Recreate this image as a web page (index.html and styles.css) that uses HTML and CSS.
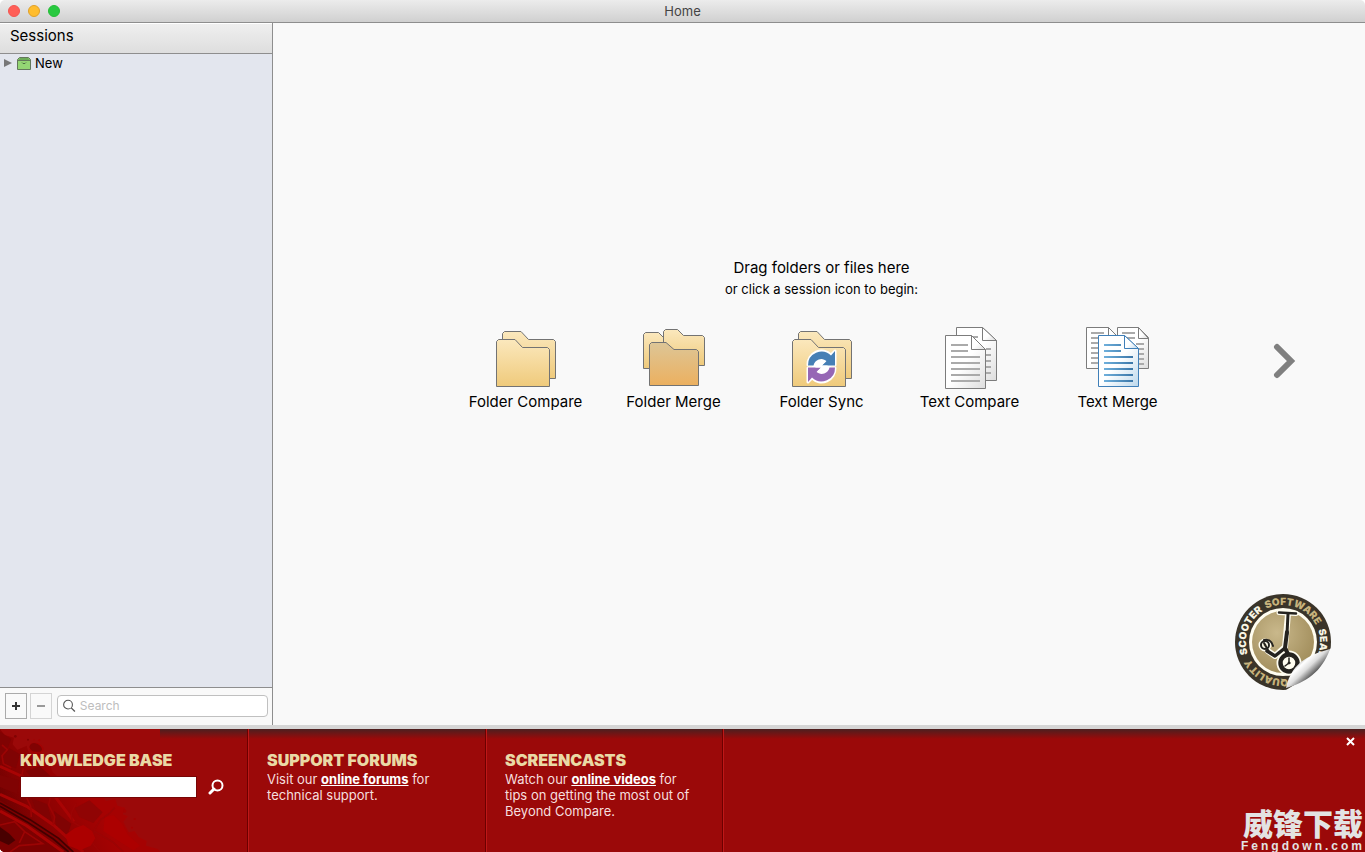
FILE: index.html
```
<!DOCTYPE html>
<html lang="en">

<head>
  <meta charset="utf-8">
  <title>Home</title>
  <meta name="viewport" content="width=device-width, initial-scale=1.0">
  <link rel="stylesheet" href="styles.css">
</head>

<body>
  <header class="titlebar">
    <div class="lights">
      <button type="button" class="light red" aria-label="Close window"></button>
      <button type="button" class="light yellow" aria-label="Minimize window"></button>
      <button type="button" class="light green" aria-label="Zoom window"></button>
    </div>
    <h1>Home</h1>
    <div></div>
  </header>

  <div class="workspace">
    <aside class="sidebar">
      <h2>Sessions</h2>
      <ul class="tree">
        <li>
          <button type="button" class="tree-item">
            <svg width="8" height="8" viewBox="0 0 8 8"><path d="M0 0L8 4L0 8Z" fill="#787878"/></svg>
            <svg class="box-icon" width="14" height="13" viewBox="0 0 14 13">
              <path d="M.5 2.5L2.5 .5H11.5L13.5 2.5V12.5H.5Z" fill="#94d674" stroke="#64785c"/>
              <path d="M1 3L3 1H11L13 3Z" fill="#6cab57"/>
              <path d="M.5 3.5H13.5" stroke="#64785c"/>
              <path d="M5 5.5L6 6.5H8L9 5.5" fill="none" stroke="#4d7043"/>
            </svg>
            New
          </button>
        </li>
      </ul>
      <div class="sidebar-tools">
        <button type="button" class="tool" aria-label="Add session">
          <svg width="10" height="10" viewBox="0 0 10 10"><path d="M1 5H9M5 1V9" stroke="#333" stroke-width="2"/></svg>
        </button>
        <button type="button" class="tool" aria-label="Remove session" disabled>
          <svg width="10" height="10" viewBox="0 0 10 10"><path d="M1 5H9" stroke="#999" stroke-width="2"/></svg>
        </button>
        <label class="search">
          <svg width="14" height="14" viewBox="0 0 14 14"><circle cx="5.5" cy="5.5" r="4.8" fill="none" stroke="#555" stroke-width="1.2"/><path d="M9 9L13 13" stroke="#555" stroke-width="1.4"/></svg>
          <input type="text" placeholder="Search" aria-label="Search">
        </label>
      </div>
    </aside>

    <main class="main">
      <section class="welcome">
        <h2>Drag folders or files here</h2>
        <p>or click a session icon to begin:</p>
        <div class="sessions">
          <button type="button" class="session">
            <svg width="64" height="64" viewBox="0 0 64 64">
              <defs>
                <linearGradient id="folder" x1="0" y1="0" x2="0" y2="1"><stop offset="0" stop-color="#fbe8bd"/><stop offset="1" stop-color="#efca7b"/></linearGradient>
                <linearGradient id="folder-dark" x1="0" y1="0" x2="0" y2="1"><stop offset="0" stop-color="#ddc697"/><stop offset="1" stop-color="#ecb05f"/></linearGradient>
                <linearGradient id="paper" x1="0" y1="0" x2="1" y2="1"><stop offset=".5" stop-color="#fff"/><stop offset="1" stop-color="#ddd"/></linearGradient>
                <linearGradient id="paper-blue" x1="0" y1="0" x2="1" y2="1"><stop offset=".5" stop-color="#fff"/><stop offset="1" stop-color="#bcd8ec"/></linearGradient>
                <linearGradient id="ink-blue" gradientUnits="userSpaceOnUse" x1="18" y1="0" x2="48" y2="0"><stop offset="0" stop-color="#6fb0dc"/><stop offset="1" stop-color="#3874a6"/></linearGradient>
              </defs>
              <g fill="url(#folder)" stroke="#737373">
                <path d="M8.500 52.500V7.500L10.500 5.500H27L34.500 13.500H59.500L61.500 15.500V52.500Z"/>
                <path d="M2.500 60.500V15.500L4.500 13.500H21L28.500 21.500H53.500L55.500 23.500V60.500Z"/>
              </g>
            </svg>
            Folder Compare
          </button>
          <button type="button" class="session">
            <svg width="64" height="64" viewBox="0 0 64 64">
              <g fill="url(#folder)" stroke="#737373">
                <path d="M1.500 42.500V8.500L3.500 6.500H16.500L21.500 11.500H40V42.500Z"/>
                <path d="M21.500 39.500V5.500L23.500 3.500H35.500L41.500 9.500H60.500L62.500 11.500V39.500Z"/>
                <path d="M7.500 59.500V18.500L9.500 16.500H24L32 23.500H54.500L56.500 25.500V59.500Z" fill="url(#folder-dark)"/>
              </g>
            </svg>
            Folder Merge
          </button>
          <button type="button" class="session">
            <svg width="64" height="64" viewBox="0 0 64 64">
              <g fill="url(#folder)" stroke="#737373">
                <path d="M8.500 52.500V7.500L10.500 5.500H27L34.500 13.500H59.500L61.500 15.500V52.500Z"/>
                <path d="M2.500 60.500V15.500L4.500 13.500H21L28.500 21.500H53.500L55.500 23.500V60.500Z"/>
              </g>
              <g stroke="#fff" stroke-width="3" stroke-linejoin="round" fill="#fff">
                <circle cx="31.500" cy="40.500" r="8"/>
                <path d="M18 39A13.500 13.500 0 0 1 41 29L45 25V39H18Z"/>
                <path d="M45 42A13.500 13.500 0 0 1 22 52L18 56V42H45Z"/>
              </g>
              <path d="M18 39.500A13.500 13.500 0 0 1 41 29.500L45 25V39.500H32L36.500 35A8 8 0 0 0 23.500 39.500Z" fill="#467fb5"/>
              <path d="M45 41.500A13.500 13.500 0 0 1 22 51.500L18 56V41.500H31L26.500 46A8 8 0 0 0 39.500 41.500Z" fill="#9667b5"/>
              <path d="M25 40.500C26 36 32 33.500 36 35.500L31.500 39.500H37.500L38 41C37 45 31 47.500 27 45.500L31.500 41.500H25.500Z" fill="#fff"/>
            </svg>
            Folder Sync
          </button>
          <button type="button" class="session">
            <svg width="64" height="64" viewBox="0 0 64 64">
              <g fill="url(#paper)" stroke="#7c7c7c">
                <path d="M18.500 1.500H44.500L58.500 14.500V54.500H18.500Z"/>
                <path d="M44.500 1.500V14.500H58.500Z"/>
              </g>
              <path d="M34 11H40M48 23H53M48 29H53M48 35H53M48 41H53M48 47H53" stroke="#aaa" stroke-width="2"/>
              <g fill="url(#paper)" stroke="#7c7c7c">
                <path d="M7.500 9.500H33.500L47.500 23.500V62.500H7.500Z"/>
                <path d="M33.500 9.500V23.500H47.500Z"/>
              </g>
              <path d="M13 19H30M13 25H30M13 31H42M13 37H42M13 43H42M13 49H42M13 55H42" stroke="#aaa" stroke-width="2"/>
            </svg>
            Text Compare
          </button>
          <button type="button" class="session">
            <svg width="64" height="64" viewBox="0 0 64 64">
              <g fill="url(#paper)" stroke="#7c7c7c">
                <path d="M.5 1.500H22.500L32.500 11.500V42.500H.5Z"/>
                <path d="M22.500 1.500V11.500H32.500Z"/>
                <path d="M31.500 1.500H52.500L62.500 11.500V42.500H31.500Z"/>
                <path d="M52.500 1.500V12.500H62.500Z"/>
              </g>
              <path d="M5 7H18M5 12H18M5 17H12M5 22H12M5 27H12M5 32H12M5 37H12M36 7H49M36 12H49M50 18H58M50 23H58M50 28H58M50 33H58M50 38H58" stroke="#aaa" stroke-width="2"/>
              <g fill="url(#paper-blue)" stroke="#3f7fb8">
                <path d="M12.500 9.500H38.500L52.500 22.500V60.500H12.500Z"/>
                <path d="M38.500 9.500V22.500H52.500Z"/>
              </g>
              <path d="M18 19H35M18 25H35M18 31H47M18 37H47M18 43H47M18 49H47M18 55H47" stroke="url(#ink-blue)" stroke-width="2"/>
            </svg>
            Text Merge
          </button>
        </div>
      </section>

      <button type="button" class="next" aria-label="More sessions">
        <svg width="24" height="36" viewBox="0 0 24 36"><path d="M5 4L19 18L5 32" fill="none" stroke="#808080" stroke-width="6" stroke-linecap="round"/></svg>
      </button>

      <svg class="seal" width="100" height="100" viewBox="0 0 100 100">
        <defs>
          <path id="ring" d="M76.200 76.200A37 37 0 0 1 23.800 23.800A37 37 0 0 1 76.200 76.200"/>
          <radialGradient id="gold" cx=".4" cy=".35" r=".7"><stop offset="0" stop-color="#c9b88b"/><stop offset="1" stop-color="#a08c5a"/></radialGradient>
          <linearGradient id="curl" gradientUnits="userSpaceOnUse" x1="64" y1="68" x2="79" y2="84"><stop offset="0" stop-color="#999"/><stop offset=".3" stop-color="#fff"/><stop offset=".6" stop-color="#ddd"/><stop offset="1" stop-color="#555"/></linearGradient>
          <clipPath id="peel"><path d="M0 0H100V55L97 57Q84 80 53 98H0Z"/></clipPath>
        </defs>
        <g clip-path="url(#peel)">
          <circle cx="50" cy="50" r="48" fill="#3a3429"/>
          <circle cx="50" cy="50" r="34" fill="#fffdf0"/>
          <circle cx="50" cy="50" r="31" fill="url(#gold)"/>
          <g class="seal-text" fill="#f8f4e4">
            <text><textPath href="#ring" startOffset="75">SCOOTER</textPath></text>
            <text><textPath href="#ring" startOffset="191">SEAL</textPath></text>
            <text fill="#c6b27c"><textPath href="#ring" startOffset="128">SOFTWARE</textPath></text>
            <text fill="#c6b27c"><textPath href="#ring" startOffset="24">QUALITY</textPath></text>
          </g>
          <g fill="none" stroke-linecap="round" stroke-linejoin="round">
            <g stroke="#fffdf0">
              <path d="M46 20.500L63 21.500" stroke-width="5"/>
              <path d="M55 22L52 55L42 64L35 59" stroke-width="6"/>
              <circle cx="32" cy="53" r="4" stroke-width="5"/>
              <circle cx="56" cy="71" r="9" stroke-width="7"/>
            </g>
            <g stroke="#25231f">
              <path d="M46 20.500L63 21.500" stroke-width="2.500"/>
              <path d="M55 22L54 42" stroke-width="3"/>
              <path d="M54 40L52 56L56 64" stroke-width="4"/>
              <path d="M52 56L42 64L34 59" stroke-width="3.500"/>
              <circle cx="32" cy="53" r="4" stroke-width="2"/>
              <path d="M31 48C36 47 39 50 40 54" stroke-width="2"/>
              <path d="M31 51L36 60" stroke-width="2"/>
              <circle cx="56" cy="71" r="8.500" stroke-width="4.500" fill="#fffdf0"/>
              <circle cx="56" cy="71" r="1" fill="#25231f"/>
              <path d="M56 71V66M56 71L52 74" stroke-width="1.500"/>
            </g>
          </g>
        </g>
        <path d="M97 57C80 62 59 68 53 96C72 91 89 80 97 57Z" fill="url(#curl)"/>
      </svg>
    </main>
  </div>

  <footer class="footer">
    <svg class="treads" width="160" height="123" viewBox="0 12 480 369">
      <defs>
        <linearGradient id="grime" gradientUnits="userSpaceOnUse" x1="0" y1="330" x2="260" y2="190"><stop offset="0" stop-color="#5a0000"/><stop offset=".4" stop-color="#850202"/><stop offset="1" stop-color="#a50202"/></linearGradient>
      </defs>
      <path d="M0 12L14 30L42 38L38 58L52 74L80 62L84 76L92 90L112 84L132 92L126 106L150 116L158 142L190 168L214 190L246 200L270 216L304 208L318 228L346 222L352 242L376 248L368 268L384 274L370 290L386 322L404 318L416 336L440 348L438 362L474 372L480 381H0Z" fill="url(#grime)"/>
      <g fill="#a20202">
        <path d="M88 64C92 50 116 50 126 62C138 76 124 88 112 86C96 88 86 78 88 64Z"/>
        <circle cx="404" cy="282" r="3"/><circle cx="118" cy="46" r="3"/><circle cx="102" cy="44" r="2"/><circle cx="374" cy="258" r="5"/><circle cx="396" cy="308" r="3"/>
      </g>
      <g fill="#800303">
        <path d="M88 66C92 50 108 52 120 62C132 74 124 82 112 80C98 82 92 76 88 66Z"/>
        <circle cx="46" cy="34" r="4"/><circle cx="84" cy="44" r="3"/>
        <path d="M0 20L34 42L24 66L0 104Z"/>
        <path d="M8 98L28 70L60 88L48 130L6 112Z"/>
        <path d="M78 138L120 124L150 152L136 170L96 160Z"/>
        <path d="M0 150L58 166L52 208L0 186Z"/>
        <path d="M94 220L142 238L156 288L112 268Z"/>
        <path d="M162 258L214 296L200 336L170 316Z"/>
        <path d="M224 250L268 226L308 262L280 294L238 276Z" fill="#900404"/>
      </g>
      <path d="M0 226L90 280L180 342L222 381H0Z" fill="#7c0101"/>
      <g fill="none">
        <g stroke="#a80404" stroke-width="9">
          <path d="M0 208L80 244L160 300L250 381"/>
          <path d="M0 124L70 156L166 216L222 290"/>
          <path d="M0 258L80 302L190 381"/>
        </g>
        <g stroke="#420000" stroke-width="5">
          <path d="M0 234L90 284L176 340L220 381"/>
          <path d="M0 244L80 290L160 342L206 381"/>
        </g>
        <g stroke="#9b0404" stroke-width="5">
          <path d="M66 150L62 184L78 214L92 244L94 276M152 212L146 240L164 276L160 300M228 236L214 264L216 290L266 318"/>
          <path d="M6 60L22 74L6 92L10 116L34 128M70 130L64 156M282 316L300 286L330 264L344 248M284 318L270 346L300 381M282 318L340 352L370 381"/>
          <path d="M0 300L44 290L74 320L128 356L104 358L58 362L30 381M74 320L58 354"/>
        </g>
      </g>
      <path d="M0 306L28 326L46 346L26 360L0 348Z" fill="#480000"/>
      <path d="M196 330L224 310L250 300L276 318L286 340L272 362L240 376L206 362ZM314 278L340 270L366 296L384 330L420 362L400 376L350 344L310 318Z" fill="#ac0000"/>
    </svg>

    <section class="panel knowledge">
      <h3><label for="kb-search">KNOWLEDGE BASE</label></h3>
      <form class="kb-form">
        <input type="text" id="kb-search">
        <button type="button" aria-label="Search knowledge base">
          <svg width="16" height="16" viewBox="0 0 16 16"><circle cx="9.500" cy="6.500" r="5" fill="none" stroke="#fff" stroke-width="2"/><path d="M6 10L2 14" stroke="#fff" stroke-width="3" stroke-linecap="round"/></svg>
        </button>
      </form>
    </section>
    <section class="panel">
      <h3>SUPPORT FORUMS</h3>
      <p>Visit our <a href="#">online forums</a> for<br>technical support.</p>
    </section>
    <section class="panel screencasts">
      <h3>SCREENCASTS</h3>
      <p>Watch our <a href="#">online videos</a> for<br>tips on getting the most out of<br>Beyond Compare.</p>
    </section>
    <div class="footer-rest"></div>
    <button type="button" class="close" aria-label="Close panel">
      <svg width="9" height="9" viewBox="0 0 9 9"><path d="M1 1L8 8M8 1L1 8" stroke="#fff" stroke-width="2"/></svg>
    </button>
    <div class="watermark">
      <span class="watermark-name">威锋下载</span>
      <span class="watermark-site">Fengdown.com</span>
    </div>
  </footer>
</body>

</html>
```

FILE: styles.css
```
* {
  box-sizing: border-box;
}

body {
  display: flex;
  flex-direction: column;
  min-height: 100vh;
  margin: 0;
  background-color: #ffffff;
  color: #000000;
  font-family: Inter, "Liberation Sans", sans-serif;
  font-size: 13px;
  line-height: 16px;
}

h1,
h2,
h3,
p,
ul {
  margin: 0;
  padding: 0;
  font-weight: 400;
}

svg {
  display: block;
}

button {
  padding: 0;
  border: 0;
  background: none;
  color: inherit;
  font: inherit;
}

.titlebar {
  display: grid;
  grid-template-columns: 1fr auto 1fr;
  align-items: center;
  height: 23px;
  border-bottom: 1px solid #8e8e8e;
  border-radius: 5px 5px 0 0;
  background: linear-gradient(to bottom, #ececec, #d0d0d0);
}

.titlebar h1 {
  color: #444444;
  font-size: 13px;
}

.lights {
  display: flex;
  gap: 8px;
  padding-left: 8px;
}

.light {
  width: 12px;
  height: 12px;
  border: 1px solid #f45550;
  border-radius: 50%;
  background-color: #ff5f57;
}

.light.yellow {
  border-color: #e0a028;
  background-color: #ffbd2e;
}

.light.green {
  border-color: #24bd36;
  background-color: #28c940;
}

.workspace {
  display: flex;
  flex: 1;
}

.sidebar {
  display: flex;
  flex-direction: column;
  width: 273px;
  border-right: 1px solid #8e8e8e;
  background-color: #e3e6ee;
}

.sidebar h2 {
  height: 31px;
  padding: 3px 10px;
  border-top: 1px solid #ffffff;
  border-bottom: 1px solid #8e8e8e;
  background: linear-gradient(to bottom, #efefef, #dedede);
  font-size: 15px;
  line-height: 18px;
}

.tree {
  flex: 1;
  list-style: none;
}

.tree-item {
  display: flex;
  align-items: center;
  gap: 4px;
  height: 18px;
  padding-left: 4px;
}

.box-icon {
  margin-left: 1px;
}

.sidebar-tools {
  display: flex;
  align-items: center;
  gap: 3px;
  height: 38px;
  padding: 0 4px 2px 5px;
  border-top: 1px solid #8e8e8e;
  background-color: #f9f9f9;
}

.tool {
  display: flex;
  align-items: center;
  justify-content: center;
  width: 22px;
  height: 26px;
  border: 1px solid #aaaaaa;
}

.tool:disabled {
  border-color: #d4d4d4;
}

.search {
  display: flex;
  flex: 1;
  align-items: center;
  gap: 4px;
  height: 22px;
  margin-left: 2px;
  padding: 0 5px;
  border: 1px solid #c0c0c0;
  border-radius: 4px;
  background-color: #ffffff;
}

.search input {
  width: 100%;
  padding: 0;
  border: 0;
  background: none;
  font: inherit;
  font-size: 12px;
  outline: none;
}

.search input::placeholder {
  color: #bdbdbd;
}

.main {
  position: relative;
  display: flex;
  flex: 1;
  align-items: center;
  justify-content: center;
  padding: 0 0 78px 5px;
  background-color: #f9f9f9;
}

.welcome {
  text-align: center;
}

.welcome h2 {
  font-size: 15px;
  line-height: 20px;
}

.welcome p {
  margin-top: 3px;
}

.sessions {
  display: flex;
  margin-top: 29px;
}

.session {
  display: flex;
  flex-direction: column;
  align-items: center;
  gap: 2px;
  width: 148px;
  font-size: 15px;
  line-height: 20px;
}

.next {
  position: absolute;
  top: 320px;
  right: 69px;
}

.seal {
  position: absolute;
  right: 32px;
  bottom: 33px;
}

.seal-text {
  font-size: 10px;
  font-weight: 900;
}

.footer {
  position: relative;
  display: flex;
  height: 127px;
  border-top: 4px solid #d6d6d6;
  border-radius: 0 0 0 5px;
  background: #9b0909 linear-gradient(to bottom, #4b2020, #9b0909 10px);
  color: #f6dfdf;
  overflow: hidden;
}

.treads {
  position: absolute;
  top: 0;
  left: 0;
  background-color: #9b0909;
}

.panel {
  position: relative;
  width: 238px;
  padding: 21px 18px;
  border-right: 1px solid #6c0000;
  border-left: 1px solid #be1818;
}

.knowledge {
  width: 248px;
  padding-left: 20px;
  border-left: 0;
}

.screencasts {
  width: 237px;
}

.footer-rest {
  flex: 1;
  border-left: 1px solid #be1818;
}

.panel h3 {
  margin-bottom: 1px;
  color: #ead9a5;
  font-size: 16px;
  font-weight: 900;
  line-height: 20px;
}

.panel a {
  color: #ffffff;
  font-weight: 700;
}

.kb-form {
  display: flex;
  align-items: center;
  gap: 11px;
  padding-top: 5px;
}

.kb-form input {
  width: 177px;
  height: 22px;
  padding: 0 4px;
  border: 1px solid #780505;
  background-color: #ffffff;
  font: inherit;
}

.close {
  position: absolute;
  top: 8px;
  right: 10px;
}

.watermark {
  position: absolute;
  right: 0;
  bottom: 0;
  color: #e3e3e3;
  text-align: center;
}

.watermark span {
  display: block;
}

.watermark-name {
  font-family: "Noto Sans CJK SC", sans-serif;
  font-size: 30px;
  font-weight: 900;
  line-height: 36px;
}

.watermark-site {
  font-family: "Liberation Sans", sans-serif;
  font-size: 12px;
  font-weight: 700;
  letter-spacing: 3px;
  line-height: 12px;
}
```
